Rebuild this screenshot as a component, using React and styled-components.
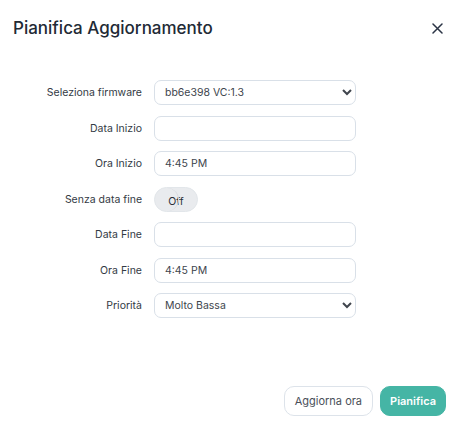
import React from 'react'
import styled, { createGlobalStyle } from 'styled-components'

const Global = createGlobalStyle`
  body {
    margin: 0;
    background: #fff;
    font-family: Inter, 'Open Sans', sans-serif;
  }
`

const Modal = styled.div`
  width: 463px;
  height: 435px;
  display: flex;
  flex-direction: column;
  box-sizing: border-box;
`

const Header = styled.div`
  display: flex;
  align-items: center;
  justify-content: space-between;
  padding: 16px 20px 0 13px;
  height: 40px;
  box-sizing: border-box;
`

const Title = styled.h1`
  margin: 0;
  font-size: 17px;
  font-weight: 500;
  color: #222a35;
`

const Close = styled.button`
  border: 0;
  background: none;
  padding: 0;
  width: 11px;
  height: 11px;
  display: flex;
  color: #2b3445;
`

const Form = styled.div`
  display: grid;
  grid-template-columns: 129px 202px;
  column-gap: 12px;
  row-gap: 10.5px;
  padding: 40px 0 0 13px;
  align-items: center;
`

const Label = styled.label`
  text-align: right;
  font-size: 10.5px;
  color: #333a44;
`

const fieldCss = `
  box-sizing: border-box;
  width: 202px;
  height: 25px;
  border: 1px solid #d9e0e8;
  border-radius: 7px;
  background: #fff;
  font-family: Inter, 'Open Sans', sans-serif;
  font-size: 10.5px;
  color: #40454d;
  padding: 0 10px;
  outline: none;
`

const Input = styled.input`
  ${fieldCss}
`

const Select = styled.select`
  ${fieldCss}
  padding: 0 6px;
`

const Switch = styled.div`
  position: relative;
  box-sizing: border-box;
  width: 44px;
  height: 25px;
  border-radius: 13px;
  background: #e9ebee;
  border: 1px solid #e2e6ea;
  display: flex;
  align-items: center;
  justify-content: center;
  padding-top: 4px;
  font-size: 10.5px;
  color: #2a2f38;
`

const Knob = styled.span`
  position: absolute;
  left: 0;
  top: 0;
  width: 23px;
  height: 23px;
  border-radius: 50%;
  border-right: 1px solid #d6dadf;
`

const Footer = styled.div`
  margin-top: auto;
  display: flex;
  justify-content: flex-end;
  gap: 7px;
  padding: 0 17px 19px 0;
`

const Button = styled.button`
  height: 30px;
  padding: 0 ${(p) => (p.$primary ? '9px' : '10px')};
  border-radius: 10px;
  font-family: Inter, 'Open Sans', sans-serif;
  font-size: 11px;
  font-weight: ${(p) => (p.$primary ? 600 : 400)};
  border: 1px solid ${(p) => (p.$primary ? '#45b5a5' : '#dde3ea')};
  background: ${(p) => (p.$primary ? '#45b5a5' : '#fff')};
  color: ${(p) => (p.$primary ? '#fff' : '#4a5059')};
`

const App = () => {
  return (
    <Modal>
      <Global />
      <Header>
        <Title>Pianifica Aggiornamento</Title>
        <Close aria-label="Chiudi">
          <svg width="11" height="11" viewBox="0 0 11 11">
            <path d="M1 1 L10 10 M10 1 L1 10" stroke="currentColor" strokeWidth="1.5" strokeLinecap="round" />
          </svg>
        </Close>
      </Header>
      <Form>
        <Label>Seleziona firmware</Label>
        <Select defaultValue="bb6e398">
          <option value="bb6e398">bb6e398 VC:1.3</option>
        </Select>
        <Label>Data Inizio</Label>
        <Input type="text" />
        <Label>Ora Inizio</Label>
        <Input type="text" defaultValue="4:45 PM" />
        <Label>Senza data fine</Label>
        <Switch>
          <Knob />
          Off
        </Switch>
        <Label>Data Fine</Label>
        <Input type="text" />
        <Label>Ora Fine</Label>
        <Input type="text" defaultValue="4:45 PM" />
        <Label>Priorità</Label>
        <Select defaultValue="1">
          <option value="1">Molto Bassa</option>
        </Select>
      </Form>
      <Footer>
        <Button>Aggiorna ora</Button>
        <Button $primary>Pianifica</Button>
      </Footer>
    </Modal>
  )
}

export default App
